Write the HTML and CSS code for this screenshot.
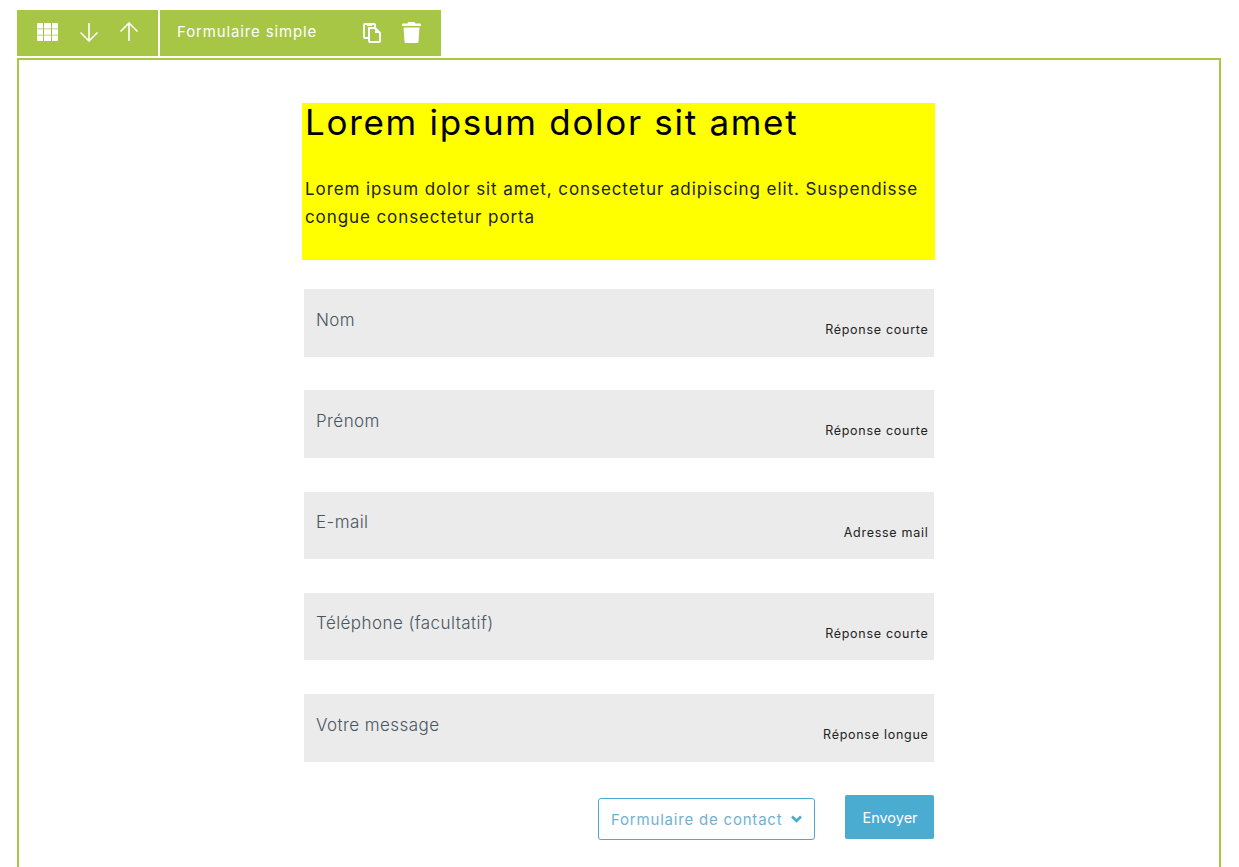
FILE: index.html
```html
<!DOCTYPE html>
<html lang="fr">
<head>
<meta charset="utf-8">
<title>Formulaire simple</title>
<link rel="stylesheet" href="styles.css">
</head>
<body>
<div class="toolbar">
  <div class="tool-group tool-left">
    <svg class="ic-grid" width="21" height="18" viewBox="0 0 21 18"><path fill="#fff" d="M1 0h5v5.500H0V1a1 1 0 0 1 1-1zM7 0h7v5.500H7zM15 0h5a1 1 0 0 1 1 1v4.500h-6zM0 6.300h6v5.400H0zM7 6.300h7v5.400H7zM15 6.300h6v5.400h-6zM0 12.500h6V18H1a1 1 0 0 1-1-1zM7 12.500h7V18H7zM15 12.500h6V17a1 1 0 0 1-1 1h-5z"/></svg>
    <svg class="ic-arrow" width="20" height="20" viewBox="0 0 20 20"><path fill="none" stroke="#fff" stroke-width="1.6" d="M10 1v18M1.500 10.500 10 19l8.500-8.500"/></svg>
    <svg class="ic-arrow" width="20" height="20" viewBox="0 0 20 20"><path fill="none" stroke="#fff" stroke-width="1.6" d="M10 19V1M1.500 9.500 10 1l8.500 8.500"/></svg>
  </div>
  <div class="tool-group tool-right">
    <span class="tool-title">Formulaire simple</span>
    <svg class="ic-copy" width="19" height="21" viewBox="0 0 19 21"><path fill="none" stroke="#fff" stroke-width="2" stroke-linejoin="round" d="M5 16H2a1 1 0 0 1-1-1V3a1 1 0 0 1 1-1h2M9 2h2a1 1 0 0 1 1 1v2M6 6h6l5 5v8a1 1 0 0 1-1 1H7a1 1 0 0 1-1-1z"/><path fill="#fff" d="M4 1h5v3H4zM12 6l5 5h-5z"/></svg>
    <svg class="ic-trash" width="19" height="21" viewBox="0 0 19 21"><path fill="#fff" d="M6.500 0h6l1 1.500H18a1 1 0 0 1 1 1V4H0V2.500a1 1 0 0 1 1-1h4.500zM1.500 5.500h16l-1 14a1.500 1.500 0 0 1-1.500 1.500H4a1.500 1.500 0 0 1-1.500-1.500z"/></svg>
  </div>
</div>
<main class="frame">
  <div class="content">
    <section class="intro">
      <h1>Lorem ipsum dolor sit amet</h1>
      <p>Lorem ipsum dolor sit amet, consectetur adipiscing elit. Suspendisse congue consectetur porta</p>
    </section>
    <div class="fields">
      <div class="field"><span class="label">Nom</span><span class="type">Réponse courte</span></div>
      <div class="field"><span class="label">Prénom</span><span class="type">Réponse courte</span></div>
      <div class="field"><span class="label">E-mail</span><span class="type">Adresse mail</span></div>
      <div class="field"><span class="label">Téléphone (facultatif)</span><span class="type">Réponse courte</span></div>
      <div class="field"><span class="label">Votre message</span><span class="type">Réponse longue</span></div>
    </div>
    <div class="actions">
      <div class="select"><span>Formulaire de contact</span>
        <svg width="11" height="8" viewBox="0 0 11 8"><path fill="none" stroke="#48acd1" stroke-width="2.600" d="M1 1.500 5.500 6 10 1.500"/></svg>
      </div>
      <button class="send" type="button">Envoyer</button>
    </div>
  </div>
</main>
</body>
</html>
```
FILE: styles.css
```css
* { box-sizing: border-box; }
html, body { height: 100%; }
body {
  margin: 0;
  overflow: hidden;
  background: #fff;
  font-family: "Inter", "Open Sans", sans-serif;
  padding: 10px 18px 0 17px;
  display: flex;
  flex-direction: column;
}
.toolbar { display: flex; flex: none; gap: 2px; height: 46px; }
.tool-group { display: flex; align-items: center; background: #a7c646; height: 46px; padding-bottom: 2px; }
.tool-left { width: 141px; padding-left: 20px; gap: 20px; }
.ic-grid { margin-right: 1px; }
.tool-right { width: 281px; padding-left: 17px; }
.tool-title { color: #fff; font-size: 15px; letter-spacing: 0.87px; width: 186px; padding-bottom: 2px; }
.ic-copy { margin-right: 20px; }
.frame {
  flex: 1;
  min-height: 0;
  margin-top: 2px;
  border: 2px solid #a7c646;
  border-bottom: 0;
  padding-top: 43px;
}
.content { width: 633px; margin-left: 283px; }
.intro { background: #ff0; height: 157px; padding: 0 3px; }
h1 { margin: 0; font-size: 35px; font-weight: 400; line-height: 38px; color: #000; letter-spacing: 1.7px; }
.intro p { margin: 34px 0 0; font-size: 17px; line-height: 28px; color: #222; letter-spacing: 0.91px; }
.fields { display: flex; flex-direction: column; gap: 33.750px; margin: 29px 1px 0 2px; }
.field { position: relative; background: #ebebeb; height: 67.500px; padding: 19.700px 12px; }
.label { font-size: 17px; font-weight: 300; color: #4a5560; line-height: 22px; letter-spacing: 0.43px; }
.type { position: absolute; right: 5.500px; bottom: 19.400px; font-size: 12.500px; color: #222; letter-spacing: 0.72px; }
.actions { display: flex; justify-content: flex-end; align-items: center; gap: 30px; margin: 32px 1px 0 2px; }
.select {
  display: flex; align-items: center; gap: 9px;
  width: 217px; height: 42px; margin-top: 4px; padding: 1px 0 0 12px;
  border: 1px solid #48acd1; border-radius: 3px;
  color: #6fb2d2; font-size: 15px; letter-spacing: 0.8px;
}
.send {
  width: 89px; height: 44px; border: 0; border-radius: 2px; padding: 2px 0 0 1px;
  background: #4bacd1; color: #fff; font: 400 14.500px "Inter", sans-serif;
}
```
